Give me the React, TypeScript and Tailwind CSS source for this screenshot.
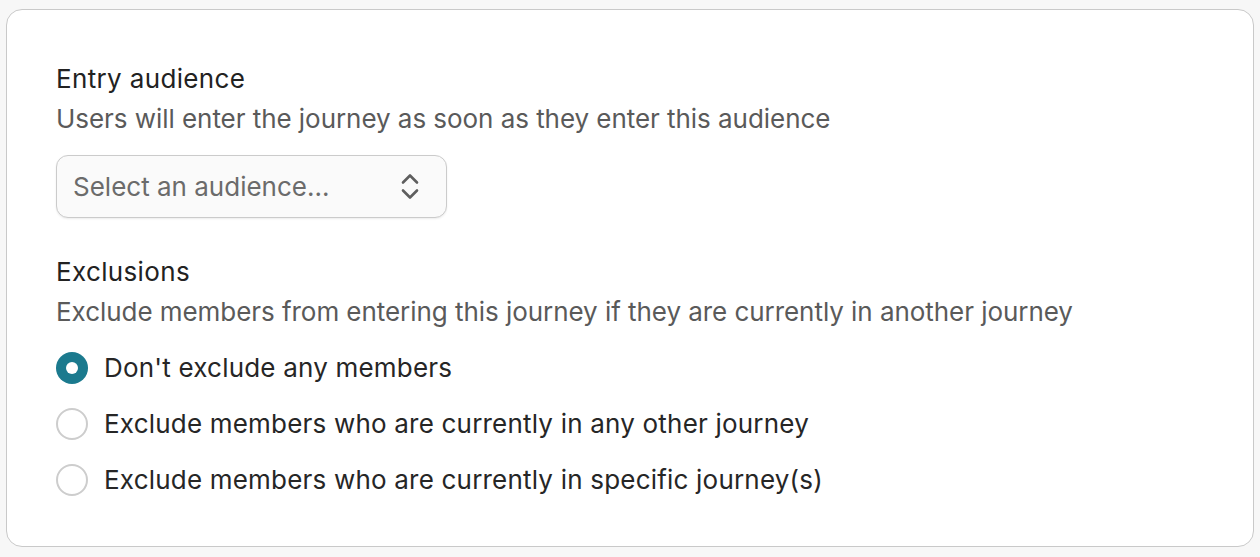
import React, { useState } from "react";

function Radio({ checked, label, onClick }: { checked: boolean; label: string; onClick: () => void }) {
  return (
    <button type="button" onClick={onClick} className="flex items-center gap-4 h-9 text-left">
      {checked ? (
        <span className="w-8 h-8 rounded-full bg-[#1b7a8e] flex items-center justify-center shrink-0">
          <span className="w-3 h-3 rounded-full bg-white" />
        </span>
      ) : (
        <span className="w-8 h-8 rounded-full border-2 border-[#cdcdcd] bg-white shrink-0" />
      )}
      <span className="text-[26px] leading-9 font-normal tracking-[0.2px] text-[#262626]">{label}</span>
    </button>
  );
}

export default function App() {
  const [sel, setSel] = useState(0);
  const opts = [
    "Don't exclude any members",
    "Exclude members who are currently in any other journey",
    "Exclude members who are currently in specific journey(s)",
  ];
  return (
    <div className="w-[1260px] h-[557px] bg-[#f7f7f7] pt-[9px] pl-[6px]" style={{ fontFamily: "Inter, 'Noto Sans', sans-serif" }}>
      <div className="w-[1248px] h-[538px] bg-white border border-[#c9c9c9] rounded-[16px] pl-[49px] pt-[51px]">
        <div className="text-[26px] leading-9 font-normal tracking-[0.35px] text-[#222]">Entry audience</div>
        <div className="text-[26px] leading-9 text-[#5a5a5a] tracking-[-0.05px] mt-1">Users will enter the journey as soon as they enter this audience</div>
        <div className="mt-[18px] w-[391px] h-[63px] rounded-[12px] border border-[#cbcbcb] bg-[#fafafa] shadow-[0_1px_2px_rgba(0,0,0,0.08)] flex items-center justify-between pl-4 pr-[27px]">
          <span className="text-[26px] text-[#6b6b6b]">Select an audience...</span>
          <svg width="18" height="27" viewBox="0 0 18 27" fill="none" stroke="#5e5e5e" strokeWidth="2.6" strokeLinecap="round" strokeLinejoin="round">
            <path d="M2 9.5 L9 2.5 L16 9.5" />
            <path d="M2 17.5 L9 24.5 L16 17.5" />
          </svg>
        </div>
        <div className="text-[26px] leading-9 font-normal tracking-[0.35px] text-[#222] mt-[36px]">Exclusions</div>
        <div className="text-[26px] leading-9 text-[#5a5a5a] tracking-[-0.05px] mt-1">Exclude members from entering this journey if they are currently in another journey</div>
        <div className="flex flex-col gap-5 mt-5">
          {opts.map((o, i) => (
            <Radio key={i} checked={sel === i} label={o} onClick={() => setSel(i)} />
          ))}
        </div>
      </div>
    </div>
  );
}
